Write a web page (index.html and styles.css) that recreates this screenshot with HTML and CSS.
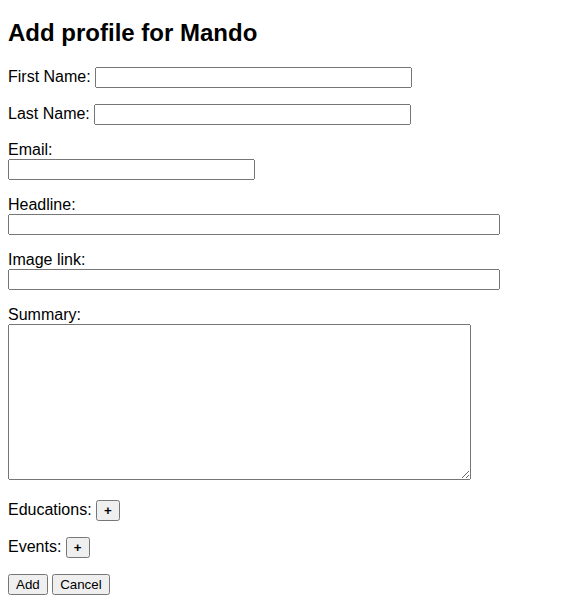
FILE: index.html
```html
<!DOCTYPE html>
<html>
<head>
<meta charset="utf-8">
<title>Add profile</title>
<link rel="stylesheet" href="styles.css">
</head>
<body>
<h2 class="title">Add profile for Mando</h2>
<form class="profile-form">
  <p class="row">
    <label for="first">First Name:</label>
    <input type="text" id="first" class="field field-first">
  </p>
  <p class="row">
    <label for="last">Last Name:</label>
    <input type="text" id="last" class="field field-first">
  </p>
  <p class="row">
    <label for="email">Email:</label><br>
    <input type="text" id="email" class="field field-email">
  </p>
  <p class="row">
    <label for="headline">Headline:</label><br>
    <input type="text" id="headline" class="field field-wide">
  </p>
  <p class="row">
    <label for="image">Image link:</label><br>
    <input type="text" id="image" class="field field-wide">
  </p>
  <p class="row">
    <label for="summary">Summary:</label><br>
    <textarea id="summary" class="summary"></textarea>
  </p>
  <p class="row">
    Educations: <button type="button" class="btn btn-plus">+</button>
  </p>
  <p class="row">
    Events: <button type="button" class="btn btn-plus">+</button>
  </p>
  <p class="row">
    <button type="submit" class="btn">Add</button>
    <button type="button" class="btn">Cancel</button>
  </p>
</form>
</body>
</html>
```

FILE: styles.css
```css
body {
  margin: 8px;
  font-family: "Liberation Sans", Arial, sans-serif;
  font-size: 16px;
  color: #000;
  background: #fff;
}

.title {
  font-size: 24px;
  font-weight: bold;
  margin: 11px 0 19.92px;
}

.row {
  margin: 16px 0;
}

.field {
  box-sizing: border-box;
  height: 21px;
  font-family: "Liberation Sans", Arial, sans-serif;
  font-size: 13.333px;
}

.field-first {
  width: 317px;
}

.field-email {
  width: 247px;
}

.field-wide {
  width: 492px;
}

.summary {
  box-sizing: border-box;
  width: 463px;
  height: 156px;
  font-family: "Liberation Mono", monospace;
  font-size: 13.333px;
}

.btn {
  font-family: "Liberation Sans", Arial, sans-serif;
  font-size: 13.333px;
}

.btn-plus {
  font-weight: bold;
}
```
